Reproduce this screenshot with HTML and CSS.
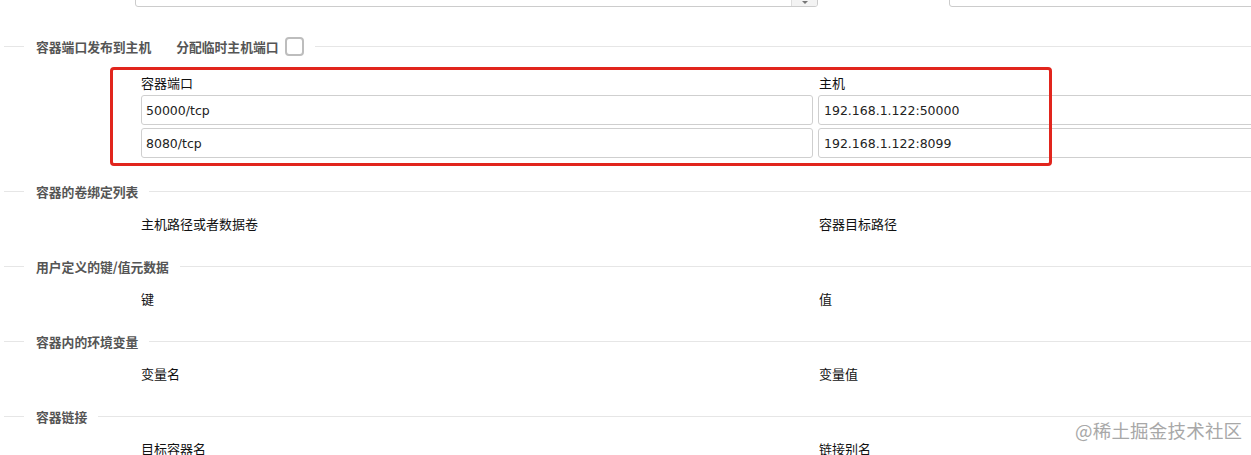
FILE: index.html
```html
<!DOCTYPE html>
<html lang="zh-CN">
<head>
<meta charset="utf-8">
<title>容器设置</title>
<link rel="stylesheet" href="styles.css">
</head>
<body>
<div class="page">
  <div class="topbar">
    <div class="top-select">
      <span class="top-select-btn"><span class="caret"></span></span>
    </div>
    <div class="top-input"></div>
  </div>

  <section class="section first">
    <div class="legend">
      <span class="lead-line"></span>
      <span class="legend-text">容器端口发布到主机</span>
      <span class="legend-text extra">分配临时主机端口</span>
      <span class="checkbox"></span>
      <span class="tail-line"></span>
    </div>
    <div class="cols ports">
      <div class="col-label">容器端口</div>
      <div class="col-label">主机</div>
      <div class="field">50000/tcp</div>
      <div class="field">192.168.1.122:50000</div>
      <div class="field">8080/tcp</div>
      <div class="field">192.168.1.122:8099</div>
    </div>
  </section>

  <section class="section">
    <div class="legend">
      <span class="lead-line"></span>
      <span class="legend-text">容器的卷绑定列表</span>
      <span class="tail-line"></span>
    </div>
    <div class="cols">
      <div class="col-label">主机路径或者数据卷</div>
      <div class="col-label">容器目标路径</div>
    </div>
  </section>

  <section class="section">
    <div class="legend">
      <span class="lead-line"></span>
      <span class="legend-text">用户定义的键/值元数据</span>
      <span class="tail-line"></span>
    </div>
    <div class="cols">
      <div class="col-label">键</div>
      <div class="col-label">值</div>
    </div>
  </section>

  <section class="section">
    <div class="legend">
      <span class="lead-line"></span>
      <span class="legend-text">容器内的环境变量</span>
      <span class="tail-line"></span>
    </div>
    <div class="cols">
      <div class="col-label">变量名</div>
      <div class="col-label">变量值</div>
    </div>
  </section>

  <section class="section">
    <div class="legend">
      <span class="lead-line"></span>
      <span class="legend-text">容器链接</span>
      <span class="tail-line"></span>
    </div>
    <div class="cols">
      <div class="col-label">目标容器名</div>
      <div class="col-label">链接别名</div>
    </div>
  </section>

  <div class="highlight"></div>
  <div class="watermark">@稀土掘金技术社区</div>
</div>
</body>
</html>
```

FILE: styles.css
```css
html, body {
  margin: 0;
  padding: 0;
  background: #fff;
}
body {
  width: 1251px;
  height: 455px;
  overflow: hidden;
  font-family: "Noto Sans CJK SC", "DejaVu Sans", sans-serif;
  font-size: 13px;
  color: #222;
}
.page {
  position: relative;
  width: 1251px;
  height: 455px;
  overflow: hidden;
}

/* top partially visible controls */
.topbar {
  display: flex;
  height: 7px;
  align-items: flex-end;
}
.top-select {
  margin-left: 135px;
  width: 683px;
  height: 30px;
  flex: none;
  box-sizing: border-box;
  border: 1px solid #ccc;
  border-radius: 3px;
  display: flex;
  justify-content: flex-end;
  overflow: hidden;
}
.top-select-btn {
  width: 26px;
  height: 100%;
  box-sizing: border-box;
  border-left: 1px solid #ddd;
  background: #f3f3f3;
  display: flex;
  align-items: flex-end;
  justify-content: center;
  padding-bottom: 2px;
}
.caret {
  width: 0;
  height: 0;
  border-left: 3px solid transparent;
  border-right: 3px solid transparent;
  border-top: 3px solid #777;
}
.top-input {
  margin-left: 131px;
  width: 320px;
  height: 30px;
  flex: none;
  box-sizing: border-box;
  border: 1px solid #ccc;
  border-radius: 3px;
}

/* sections */
.section {
  margin-top: 23px;
}
.section.first {
  margin-top: 29px;
}
.legend {
  display: flex;
  align-items: center;
  height: 20px;
}
.lead-line {
  margin-left: 4px;
  width: 20px;
  height: 1px;
  background: #e6e6e6;
  flex: none;
}
.legend-text {
  margin-left: 12px;
  font-weight: 700;
  color: #555;
  font-size: 12.8px;
  white-space: nowrap;
}
.legend-text.extra {
  margin-left: 25px;
}
.checkbox {
  margin-left: 6px;
  width: 19px;
  height: 19px;
  box-sizing: border-box;
  border: 2px solid #bdbdbd;
  border-radius: 4px;
  flex: none;
}
.tail-line {
  flex: 1;
  margin-left: 11px;
  height: 1px;
  background: #e6e6e6;
}

.cols {
  display: grid;
  grid-template-columns: 672px 672px;
  column-gap: 5px;
  row-gap: 3px;
  margin-left: 141px;
  margin-top: 14px;
}
.cols.ports {
  margin-top: 18px;
}
.col-label {
  height: 18px;
  line-height: 18px;
  white-space: nowrap;
  color: #111;
}
.cols .col-label:nth-child(2) {
  padding-left: 1px;
}
.field {
  height: 30px;
  box-sizing: border-box;
  border: 1px solid #cfcfcf;
  border-radius: 3px;
  padding-left: 4px;
  padding-top: 1px;
  line-height: 28px;
  font-family: "DejaVu Sans", sans-serif;
  font-size: 12.5px;
  color: #222;
  white-space: nowrap;
}
.field:nth-child(4), .field:nth-child(6) {
  padding-left: 5px;
}

/* annotation overlay */
.highlight {
  position: absolute;
  left: 110px;
  top: 67px;
  width: 942px;
  height: 99px;
  box-sizing: border-box;
  border: 3px solid #e1251d;
  border-radius: 4px;
}
.watermark {
  position: absolute;
  left: 1075px;
  top: 417px;
  font-size: 18.5px;
  color: #a8a8a8;
  letter-spacing: 0.2px;
  text-shadow: 0 0 1px #fff, 0 0 2px #fff;
  white-space: nowrap;
}
```
